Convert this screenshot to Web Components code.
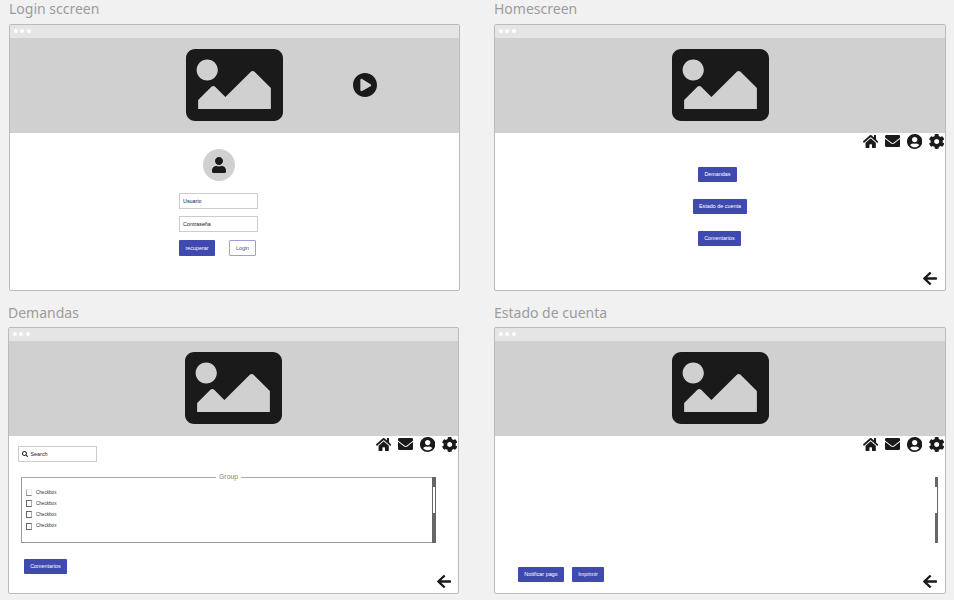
<!DOCTYPE html>
<html lang="es">
<head>
<meta charset="utf-8">
<title>Wireframes</title>
<style>
html,body{margin:0;height:100%;background:#f1f1f1;overflow:hidden}
body{font-family:"Liberation Sans",Arial,sans-serif}
</style>
</head>
<body>
<wire-board></wire-board>
<script>
const ICONS = {
  image: ['0 64 512 384', 'M464 448H48c-26.51 0-48-21.49-48-48V112c0-26.51 21.49-48 48-48h416c26.51 0 48 21.49 48 48v288c0 26.51-21.49 48-48 48zM112 120c-30.928 0-56 25.072-56 56s25.072 56 56 56 56-25.072 56-56-25.072-56-56-56zM64 384h384V272l-87.515-87.515c-4.686-4.686-12.284-4.686-16.971 0L208 320l-55.515-55.515c-4.686-4.686-12.284-4.686-16.971 0L64 336v48z'],
  play: ['8 8 496 496', 'M256 8C119 8 8 119 8 256s111 248 248 248 248-111 248-248S393 8 256 8zm115.7 272l-176 101c-15.8 8.8-35.7-2.5-35.7-21V152c0-18.4 19.8-29.8 35.7-21l176 107c16.400 9.200 16.400 32.900 0 42z'],
  user: ['0 0 448 512', 'M224 256c70.700 0 128-57.300 128-128S294.700 0 224 0 96 57.300 96 128s57.300 128 128 128zm89.600 32h-16.700c-22.200 10.200-46.900 16-72.900 16s-50.600-5.800-72.900-16h-16.700C60.200 288 0 348.200 0 422.400V464c0 26.500 21.500 48 48 48h352c26.500 0 48-21.500 48-48v-41.600c0-74.200-60.200-134.400-134.400-134.400z'],
  home: ['0 30 576 452', 'M280.370 148.260L96 300.110V464a16 16 0 0 0 16 16l112.060-.290a16 16 0 0 0 15.920-16V368a16 16 0 0 1 16-16h64a16 16 0 0 1 16 16v95.640a16 16 0 0 0 16 16.050L464 480a16 16 0 0 0 16-16V300L295.670 148.260a12.190 12.190 0 0 0-15.300 0zM571.600 251.470L488 182.560V44.050a12 12 0 0 0-12-12h-56a12 12 0 0 0-12 12v72.610L318.470 43a48 48 0 0 0-61 0L4.340 251.470a12 12 0 0 0-1.600 16.900l25.500 31A12 12 0 0 0 45.150 301l235.220-193.740a12.190 12.190 0 0 1 15.300 0L530.900 301a12 12 0 0 0 16.900-1.600l25.500-31a12 12 0 0 0-1.700-16.930z'],
  mail: ['0 64 512 384', 'M502.300 190.800c3.900-3.100 9.700-.2 9.700 4.700V400c0 26.500-21.500 48-48 48H48c-26.500 0-48-21.500-48-48V195.600c0-5 5.700-7.800 9.700-4.700 22.400 17.400 52.100 39.500 154.100 113.600 21.100 15.400 56.700 47.800 92.200 47.600 35.700.3 72-32.800 92.300-47.600 102-74.100 131.600-96.300 154-113.700zM256 320c23.200.4 56.600-29.200 73.400-41.400 132.700-96.300 142.800-104.700 173.400-128.700 5.800-4.500 9.200-11.500 9.200-18.900v-19c0-26.500-21.500-48-48-48H48c-26.500 0-48 21.500-48 48v19c0 7.400 3.400 14.300 9.200 18.900 30.600 23.900 40.700 32.400 173.400 128.700 16.800 12.200 50.200 41.800 73.400 41.400z'],
  circle: ['0 8 496 496', 'M248 8C111 8 0 119 0 256s111 248 248 248 248-111 248-248S385 8 248 8zm0 96c48.600 0 88 39.400 88 88s-39.400 88-88 88-88-39.400-88-88 39.400-88 88-88zm0 344c-58.700 0-111.300-26.600-146.500-68.200 18.800-35.400 55.600-59.800 98.500-59.800 2.400 0 4.800.4 7.100 1.100 13 4.200 26.600 6.900 40.900 6.900 14.300 0 28-2.700 40.900-6.900 2.300-.7 4.700-1.100 7.100-1.100 42.900 0 79.700 24.400 98.500 59.800C359.300 421.400 306.700 448 248 448z'],
  cog: ['12 8 488 496', 'M487.400 315.700l-42.600-24.600c4.300-23.200 4.300-47 0-70.200l42.600-24.600c4.900-2.800 7.100-8.600 5.500-14-11.100-35.600-30-67.800-54.700-94.600-3.800-4.100-10-5.100-14.800-2.300L380.800 110c-17.900-15.400-38.500-27.300-60.800-35.100V25.800c0-5.600-3.900-10.500-9.400-11.700-36.700-8.200-74.300-7.800-109.200 0-5.500 1.200-9.400 6.100-9.400 11.700V75c-22.200 7.900-42.800 19.800-60.800 35.100L88.700 85.500c-4.900-2.800-11-1.900-14.800 2.300-24.700 26.700-43.600 58.900-54.700 94.600-1.700 5.400.6 11.200 5.500 14L67.300 221c-4.300 23.200-4.300 47 0 70.200l-42.600 24.600c-4.900 2.800-7.100 8.600-5.500 14 11.100 35.600 30 67.800 54.700 94.600 3.800 4.100 10 5.100 14.800 2.300l42.600-24.600c17.900 15.400 38.500 27.300 60.800 35.100v49.200c0 5.600 3.900 10.500 9.400 11.700 36.700 8.200 74.300 7.800 109.200 0 5.500-1.200 9.400-6.100 9.400-11.700v-49.200c22.200-7.900 42.800-19.800 60.800-35.100l42.600 24.600c4.900 2.800 11 1.900 14.800-2.300 24.700-26.700 43.600-58.900 54.700-94.600 1.500-5.500-.7-11.300-5.600-14.100zM256 336c-44.100 0-80-35.900-80-80s35.900-80 80-80 80 35.900 80 80-35.900 80-80 80z'],
  back: ['0 40 448 432', 'M257.500 445.100l-22.200 22.200c-9.400 9.400-24.600 9.400-33.900 0L7 273c-9.400-9.400-9.400-24.600 0-33.900L201.400 44.700c9.400-9.400 24.600-9.400 33.900 0l22.200 22.200c9.500 9.500 9.300 25-.4 34.300L136.600 216H424c13.300 0 24 10.700 24 24v32c0 13.300-10.700 24-24 24H136.600l120.500 114.800c9.800 9.300 10 24.800.4 34.300z'],
  search: ['0 0 512 512', 'M505 442.700L405.300 343c-4.500-4.500-10.600-7-17-7H372c27.600-35.300 44-79.700 44-128C416 93.100 322.900 0 208 0S0 93.100 0 208s93.100 208 208 208c48.300 0 92.700-16.400 128-44v16.300c0 6.400 2.500 12.500 7 17l99.700 99.700c9.400 9.400 24.600 9.400 33.900 0l28.300-28.300c9.400-9.400 9.400-24.600.1-34zM208 336c-70.700 0-128-57.200-128-128 0-70.700 57.200-128 128-128 70.700 0 128 57.200 128 128 0 70.700-57.200 128-128 128z']
};

function define(name, html) {
  customElements.define(name, class extends HTMLElement {
    constructor() {
      super();
      const t = document.createElement('template');
      t.innerHTML = html;
      this.attachShadow({mode: 'open'}).append(t.content.cloneNode(true));
    }
  });
}

customElements.define('wire-icon', class extends HTMLElement {
  connectedCallback() {
    const [box, d] = ICONS[this.getAttribute('name')];
    const root = this.shadowRoot || this.attachShadow({mode: 'open'});
    root.innerHTML = `<style>:host{display:block;flex:none;color:#1a1a1a}svg{display:block;width:100%;height:100%}</style>
      <svg viewBox="${box}" preserveAspectRatio="none"><path fill="currentColor" d="${d}"/></svg>`;
  }
});

define('wire-button', `<style>
  :host{display:flex;align-items:center;justify-content:center;box-sizing:border-box;flex:none;height:15px;
    background:#3f49b0;color:#fff;border-radius:1px;font-size:5.4px;line-height:7px;white-space:nowrap}
  :host([outline]){background:#fff;color:#3f49b0;border:1px solid #9aa0d8}
  </style><slot></slot>`);

define('wire-input', `<style>
  :host{display:flex;align-items:center;box-sizing:border-box;width:79px;height:16px;padding-left:3px;gap:2.500px;
    background:#fff;border:1px solid #ccc;font-size:5.4px;line-height:7px;color:#222}
  </style><slot name="icon"></slot><slot></slot>`);

define('wire-check', `<style>
  :host{display:flex;align-items:center;height:11.2px;gap:4px;font-size:4.6px;line-height:6px;color:#333}
  i{box-sizing:border-box;width:6px;height:7px;border:1px solid #666;border-right-color:#aaa}
  :host([faint]) i{border-color:#eee #eee #888 #aaa}
  </style><i></i><slot></slot>`);

define('wire-scroll', `<style>
  :host{display:flex;flex-direction:column;box-sizing:border-box;width:4px;height:66px;background:#666;padding:10px 1px 0}
  :host([edge]){width:3px;padding:10px 1px 0 0}
  b{height:26px;background:#fff}
  </style><b></b>`);

define('wire-nav', `<style>
  :host{display:flex;justify-content:flex-end;align-items:center;height:16px;gap:6.500px}
  wire-icon{width:15.400px;height:15px}
  wire-icon[name=home]{height:13px}
  wire-icon[name=mail]{height:12px}
  </style><wire-icon name="home"></wire-icon><wire-icon name="mail"></wire-icon><wire-icon name="circle"></wire-icon><wire-icon name="cog"></wire-icon>`);

define('wire-window', `<style>
  :host{display:block}
  .title{box-sizing:border-box;height:24px;padding-top:var(--title-top,0);font:14px/18px "Noto Sans",sans-serif;color:#9c9c9c;white-space:nowrap}
  .frame{display:flex;flex-direction:column;box-sizing:border-box;height:267px;border:1px solid #bbb;border-radius:2px;background:#fff;overflow:hidden}
  .bar{display:flex;align-items:center;box-sizing:border-box;height:13px;padding:0 0 1px 3.500px;gap:2.500px;background:#e5e5e5}
  .bar i{width:4px;height:4px;border-radius:50%;background:#fff}
  .hero{display:grid;grid-template-columns:1fr 97px 1fr;align-items:center;box-sizing:border-box;height:95px;padding-bottom:1px;background:#d0d0d0}
  .hero wire-icon{width:97px;height:72px;grid-column:2}
  .body{flex:1;display:flex;flex-direction:column;min-height:0}
  </style>
  <div class="title"><slot name="title"></slot></div>
  <div class="frame"><div class="bar"><i></i><i></i><i></i></div>
  <div class="hero"><wire-icon name="image"></wire-icon><slot name="media"></slot></div>
  <div class="body"><slot></slot></div></div>`);

define('wire-board', `<style>
  :host{display:grid;grid-template-columns:452px 452px;grid-template-rows:291px 291px;column-gap:33px;row-gap:12px;padding-left:9px}
  .w1{margin-right:1px}
  .w3{margin:0 2px 0 -1px}
  .w3,.w4{--title-top:1px}
  .play{width:24px;height:24px;margin-left:70px}
  .avatar{display:grid;place-items:center;width:32px;height:32px;margin:16px 0 0 192.5px;border-radius:50%;background:#d0d0d0}
  .avatar wire-icon{width:14px;height:16px}
  .field{margin-left:169px}
  .row{display:flex}
  wire-nav{margin-right:1px}
  .back{width:14px;height:13px;margin:auto 8px 5px auto}
  .group{display:flex;justify-content:space-between;margin:15px 22px 0 12px;height:66px}
  .box{flex:1;display:grid;grid-template-columns:194px auto 1fr;grid-template-rows:1px 1fr;border:solid #999;border-width:0 0 1px 1px;box-sizing:border-box}
  .line{background:#aaa}
  .legend{font-size:6.900px;line-height:8px;height:8px;margin-top:-4px;padding:0 3px;color:#888}
  .checks{grid-column:1/-1;padding:9px 0 0 4px}
  </style>
  <wire-window class="w1">
    <span slot="title">Login sccreen</span>
    <wire-icon class="play" slot="media" name="play"></wire-icon>
    <div class="avatar"><wire-icon name="user"></wire-icon></div>
    <wire-input class="field" style="margin-top:12px">Usuario</wire-input>
    <wire-input class="field" style="margin-top:7px">Contraseña</wire-input>
    <div class="row" style="margin:8px 0 0 169px;gap:14px"><wire-button style="width:36px;height:16px">recuperar</wire-button><wire-button outline style="width:27px;height:16px">Login</wire-button></div>
  </wire-window>
  <wire-window class="w2">
    <span slot="title">Homescreen</span>
    <wire-nav></wire-nav>
    <wire-button style="width:39px;margin:18px 0 0 203px">Demandas</wire-button>
    <wire-button style="width:54px;margin:17px 0 0 198px">Estado de cuenta</wire-button>
    <wire-button style="width:43px;margin:17px 0 0 203px">Comentarios</wire-button>
    <wire-icon class="back" name="back"></wire-icon>
  </wire-window>
  <wire-window class="w3">
    <span slot="title">Demandas</span>
    <wire-nav></wire-nav>
    <wire-input style="margin:-6px 0 0 9px"><wire-icon slot="icon" name="search" style="width:6px;height:6px"></wire-icon>Search</wire-input>
    <div class="group">
      <div class="box"><div class="line"></div><div class="legend">Group</div><div class="line"></div>
        <div class="checks"><wire-check faint>Checkbox</wire-check><wire-check>Checkbox</wire-check><wire-check>Checkbox</wire-check><wire-check>Checkbox</wire-check></div>
      </div>
      <wire-scroll></wire-scroll>
    </div>
    <div class="row" style="align-items:flex-start;flex:1;padding-top:16px"><wire-button style="width:43px;margin-left:15px">Comentarios</wire-button>
      <wire-icon class="back" name="back" style="margin-right:7px"></wire-icon></div>
  </wire-window>
  <wire-window class="w4">
    <span slot="title">Estado de cuenta</span>
    <wire-nav></wire-nav>
    <wire-scroll edge style="margin:25px 7px 0 auto"></wire-scroll>
    <div class="row" style="margin-top:auto;align-items:flex-end;gap:8px;padding-left:23px"><wire-button style="width:46px;margin-bottom:11px">Notificar pago</wire-button><wire-button style="width:32px;margin-bottom:11px">Imprimir</wire-button>
      <wire-icon class="back" name="back"></wire-icon></div>
  </wire-window>`);
</script>
</body>
</html>
